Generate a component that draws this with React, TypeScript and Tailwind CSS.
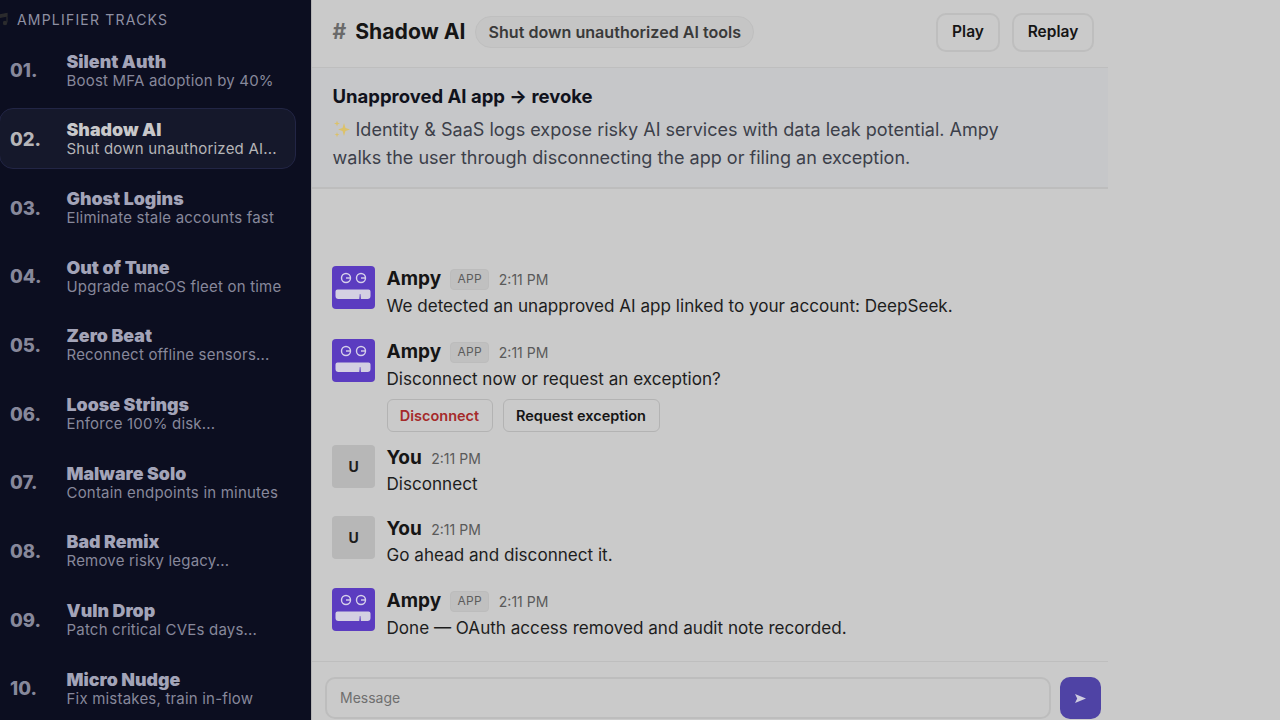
import clsx from 'clsx'

const TRACKS = [
  { title: 'Silent Auth', sub: 'Boost MFA adoption by 40%' },
  { title: 'Shadow AI', sub: 'Shut down unauthorized AI...' },
  { title: 'Ghost Logins', sub: 'Eliminate stale accounts fast' },
  { title: 'Out of Tune', sub: 'Upgrade macOS fleet on time' },
  { title: 'Zero Beat', sub: 'Reconnect offline sensors...' },
  { title: 'Loose Strings', sub: 'Enforce 100% disk...' },
  { title: 'Malware Solo', sub: 'Contain endpoints in minutes' },
  { title: 'Bad Remix', sub: 'Remove risky legacy...' },
  { title: 'Vuln Drop', sub: 'Patch critical CVEs days...' },
  { title: 'Micro Nudge', sub: 'Fix mistakes, train in-flow' },
]

function AmpyAvatar() {
  return (
    <svg width="43" height="43" viewBox="0 0 43 43" className="shrink-0">
      <rect width="43" height="43" rx="4" fill="#5b3cc0" />
      <g fill="none" stroke="#d6d0ea" strokeWidth="1.400">
        <circle cx="14" cy="12" r="4.500" />
        <path d="M14 12h4.500" />
        <circle cx="29" cy="12" r="4.500" />
        <path d="M29 12h4.500" />
      </g>
      <path
        d="M3.500 25.500a2 2 0 0 1 2-2h31a2 2 0 0 1 2 2v4.500a3 3 0 0 1-3 3h-29a3 3 0 0 1-3-3z"
        fill="#d4d0e2"
      />
      <path d="M27.300 33l0.500-5h0.600l0.500 5z" fill="#5b3cc0" />
    </svg>
  )
}

function UserAvatar() {
  return (
    <div className="w-[43px] h-[43px] shrink-0 rounded bg-[#b7b7b7] flex items-center justify-center text-[14px] font-bold text-[#1c1c1c]">
      U
    </div>
  )
}

function MsgHead({ name, app }: { name: string; app?: boolean }) {
  return (
    <div className="flex items-center h-[26px]">
      <span className="text-[19px] font-bold text-[#151515]">{name}</span>
      {app && (
        <span className="ml-[9px] h-[21px] px-[6.500px] flex items-center rounded bg-[#c0c0c0] border border-[#bcbcbc] text-[12px] text-[#5c5c5c] tracking-[0.2px]">
          APP
        </span>
      )}
      <span className="ml-[9.500px] text-[14px] text-[#5a5a5a]">2:11 PM</span>
    </div>
  )
}

function Sparkles() {
  return (
    <svg width="18" height="18" viewBox="0 0 18 18" className="inline-block align-[-2px] mr-[5px]">
      <path d="M11 3l1.500 5 4.500 1.500-4.500 1.500-1.500 5-1.500-5L5 9.500 9.500 8z" fill="#dcc26a" />
      <path d="M4 0.500l0.700 2.300 2.300 0.700-2.300 0.700L4 6.500 3.300 4.200 1 3.500l2.300-0.700z" fill="#dcc26a" />
      <path d="M4 12l0.600 2 1.900 0.600-1.900 0.600L4 17.500l-0.600-2.300-1.900-0.600 1.900-0.600z" fill="#dcc26a" />
    </svg>
  )
}

function Message({
  name,
  text,
  app,
  className,
  children,
}: {
  name: string
  text: string
  app?: boolean
  className?: string
  children?: React.ReactNode
}) {
  return (
    <div className={clsx('flex gap-[11.500px]', className)}>
      {name === 'You' ? <UserAvatar /> : <AmpyAvatar />}
      <div className="min-w-0">
        <MsgHead name={name} app={app} />
        <p className={clsx('text-[17.100px] leading-[26px] text-[#1d1d1d]', app && 'mt-[1px]')}>{text}</p>
        {children}
      </div>
    </div>
  )
}

export default function App() {
  return (
    <div
      className="w-[1280px] h-[720px] overflow-hidden flex bg-[#cacaca]"
      style={{ fontFamily: 'Inter, "Liberation Sans", sans-serif' }}
    >
      {/* sidebar */}
      <aside className="w-[311.500px] shrink-0 h-full bg-[#0c0e20] border-r border-[#b5b5b5] overflow-hidden">
        <div className="h-[39.500px] flex items-center gap-[9px] -ml-[6px]">
          <svg width="14" height="15" viewBox="0 0 14 15" className="shrink-0">
            <path d="M5 3v9M13 1.500v9M5 3l8-1.500v2.500L5 5.500z" stroke="#2c2c2e" strokeWidth="1.200" fill="#2c2c2e" />
            <circle cx="3" cy="12.500" r="2.200" fill="#2c2c2e" />
            <circle cx="11" cy="11" r="2.200" fill="#2c2c2e" />
          </svg>
          <span className="text-[14px] text-[#8f90a3] tracking-[1.200px]">AMPLIFIER TRACKS</span>
        </div>
        <div className="flex flex-col gap-[7.700px] -ml-[1px] w-[297px]">
          {TRACKS.map((t, i) => {
            const active = i === 1
            return (
              <div
                key={t.title}
                className={clsx(
                  'h-[61px] shrink-0 flex items-center rounded-[14px] border pl-[10px]',
                  active ? 'bg-[#15182b] border-[#222545]' : 'border-transparent',
                )}
              >
                <span
                  className={clsx(
                    'w-[56.500px] shrink-0 mt-[2px] text-[18.500px] font-extrabold',
                    active ? 'text-[#b5b5b8]' : 'text-[#87889b]',
                  )}
                >
                  {String(i + 1).padStart(2, '0')}.
                </span>
                <div className="min-w-0 mt-[1px]">
                  <div
                    className={clsx(
                      'text-[17.800px] leading-[19px] font-black',
                      active ? 'text-[#c8c8ca]' : 'text-[#a3a4b8]',
                    )}
                  >
                    {t.title}
                  </div>
                  <div
                    className={clsx(
                      'text-[15px] leading-[19px] whitespace-nowrap tracking-[0.2px]',
                      active ? 'text-[#b5b5b8]' : 'text-[#87889b]',
                    )}
                  >
                    {t.sub}
                  </div>
                </div>
              </div>
            )
          })}
        </div>
      </aside>

      {/* main */}
      <main className="w-[796.500px] shrink-0 h-full flex flex-col">
        <header className="h-[68px] shrink-0 border-b border-[#bebebe] flex items-center pl-[21px] pr-[14px] pb-[3px]">
          <span className="text-[21.200px] font-bold text-[#6a6a6a] mr-[9px]">#</span>
          <h1 className="text-[21.200px] font-bold text-[#151515]">Shadow AI</h1>
          <span className="ml-[10px] h-[32px] px-[12px] rounded-full bg-[#c5c5c5] border border-[#bfbfbf] flex items-center text-[16.100px] font-semibold text-[#3a3a3a]">
            Shut down unauthorized AI tools
          </span>
          <div className="ml-auto flex gap-[12px]">
            <button className="h-[39px] w-[64px] rounded-[10px] border-2 border-[#bebebe] text-[15.500px] font-semibold text-[#151515]">
              Play
            </button>
            <button className="h-[39px] w-[82px] rounded-[10px] border-2 border-[#bebebe] text-[15.500px] font-semibold text-[#151515]">
              Replay
            </button>
          </div>
        </header>

        <section className="h-[121px] shrink-0 bg-[#c6c7c9] border-b-2 border-[#bdbdbd] pl-[21px] pt-[16px]">
          <h2 className="text-[18.500px] leading-[24px] font-bold text-[#10121c]">Unapproved AI app → revoke</h2>
          <p className="mt-[8px] text-[18.050px] leading-[28px] text-[#3c3f49] w-[690px]">
            <Sparkles />
            Identity &amp; SaaS logs expose risky AI services with data leak potential. Ampy walks the user through
            disconnecting the app or filing an exception.
          </p>
        </section>

        <div className="flex-1 min-h-0 flex flex-col justify-end pl-[20.500px] pb-[20px]">
          <Message app name="Ampy" text="We detected an unapproved AI app linked to your account: DeepSeek." />
          <Message app name="Ampy" text="Disconnect now or request an exception?" className="mt-[20px]">
            <div className="flex gap-[10px] mt-[7px]">
              <button className="h-[33px] w-[106px] rounded-[6px] border border-[#b3b3b3] text-[14.500px] font-semibold text-[#a52a2a]">
                Disconnect
              </button>
              <button className="h-[33px] w-[157px] rounded-[6px] border border-[#b3b3b3] text-[14.500px] font-semibold text-[#151515]">
                Request exception
              </button>
            </div>
          </Message>
          <Message name="You" text="Disconnect" className="mt-[13px]" />
          <Message name="You" text="Go ahead and disconnect it." className="mt-[19px]" />
          <Message app name="Ampy" text="Done — OAuth access removed and audit note recorded." className="mt-[20px]" />
        </div>

        <footer className="h-[59px] shrink-0 border-t border-[#bebebe] flex gap-[9px] pl-[13.500px] pr-[7px] pt-[15px]">
          <div className="flex-1 h-[42px] rounded-[10px] border-2 border-[#bdbdbd] flex items-center pl-[13px] pb-[1px] text-[14px] text-[#6f6f6f]">
            Message
          </div>
          <button className="w-[41px] h-[42px] rounded-[10px] bg-[#4f43a5] flex items-center justify-center">
            <svg width="11" height="9" viewBox="0 0 11 9">
              <path d="M0 0l11 4.500L0 9l2.200-4.500z" fill="#cfcde0" />
            </svg>
          </button>
        </footer>
      </main>
    </div>
  )
}
